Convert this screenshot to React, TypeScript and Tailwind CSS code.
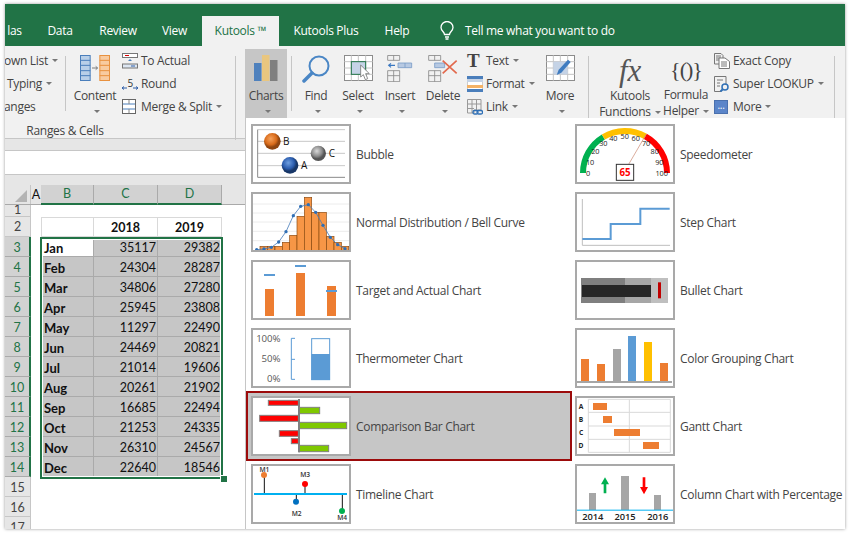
import type { ReactNode } from "react";

const rows = [
  ["Jan", 35117, 29382],
  ["Feb", 24304, 28287],
  ["Mar", 34806, 27280],
  ["Apr", 25945, 23808],
  ["May", 11297, 22490],
  ["Jun", 24469, 20821],
  ["Jul", 21014, 19606],
  ["Aug", 20261, 21902],
  ["Sep", 16685, 22494],
  ["Oct", 21253, 24335],
  ["Nov", 26310, 24567],
  ["Dec", 22640, 18546],
];

const Caret = () => <span className="inline-block ml-[4px] align-middle border-x-[3px] border-t-[3px] border-x-transparent border-t-[#777]" />;

// thumbnails are drawn in 3x units, so 3 units is one pixel on screen
const Thumb = ({ x, y, children }: { x: number; y: number; children: ReactNode }) => (
  <div className="w-[100px] h-[60px] shrink-0 border-2 border-[#a9a9a9] bg-white">
    <svg width="96" height="56" viewBox={`${x} ${y} 288 168`} className="block" fontFamily="'Open Sans', sans-serif">
      {children}
    </svg>
  </div>
);

const Bubble = () => (
  <Thumb x={24} y={24}>
    <defs>
      <radialGradient id="bo" cx="40%" cy="35%"><stop offset="0" stopColor="#f5a25d" /><stop offset="0.7" stopColor="#d96b1a" /><stop offset="1" stopColor="#8f4510" /></radialGradient>
      <radialGradient id="bb" cx="40%" cy="35%"><stop offset="0" stopColor="#6f9fe0" /><stop offset="0.7" stopColor="#2a5cae" /><stop offset="1" stopColor="#173667" /></radialGradient>
      <radialGradient id="bg" cx="40%" cy="35%"><stop offset="0" stopColor="#d8d8d8" /><stop offset="0.7" stopColor="#8a8a8a" /><stop offset="1" stopColor="#555" /></radialGradient>
    </defs>
    <path d="M38 35H300M38 70H300M38 106H300M38 143H300" stroke="#bdbdbd" strokeWidth="2.5" />
    <path d="M38 35V178H300" stroke="#8a8a8a" strokeWidth="3" fill="none" />
    <circle cx="82" cy="70" r="25" fill="url(#bo)" />
    <circle cx="135" cy="142" r="25" fill="url(#bb)" />
    <circle cx="220" cy="106" r="23" fill="url(#bg)" />
    <text x="114" y="80" fontSize="30" fill="#111">B</text>
    <text x="168" y="153" fontSize="30" fill="#111">A</text>
    <text x="251" y="118" fontSize="30" fill="#111">C</text>
  </Thumb>
);

const bell = [[45, 385], [67, 385], [90, 385], [112, 373], [134, 352], [156, 295], [178, 238], [200, 283], [222, 283], [245, 355], [267, 373], [289, 385]];
const bellDots = [[35, 395], [57, 393], [79, 388], [101, 372], [123, 341], [145, 293], [167, 265], [190, 260], [212, 283], [234, 322], [256, 358], [278, 380], [300, 392]];

const BellCurve = () => (
  <Thumb x={24} y={228}>
    <path d="M24 258H312M24 285H312M24 312H312M24 340H312M24 368H312" stroke="#e3e3e3" strokeWidth="2" />
    {bell.map(([x, t]) => <rect key={x} x={x} y={t} width="22" height={398 - t} fill="#f79646" stroke="#8a4a10" strokeWidth="2" />)}
    <polyline points={bellDots.map((p) => p.join(",")).join(" ")} fill="none" stroke="#4a7ebb" strokeWidth="2.5" />
    {bellDots.map(([x, y]) => <circle key={x} cx={x} cy={y} r="5" fill="#2f6fb5" />)}
  </Thumb>
);

const TargetActual = () => (
  <Thumb x={24} y={21}>
    <rect x="60" y="102" width="27" height="81" fill="#ed7d31" />
    <rect x="153" y="54" width="27" height="129" fill="#ed7d31" />
    <rect x="246" y="93" width="27" height="90" fill="#ed7d31" />
    <rect x="57" y="57" width="33" height="6" fill="#5b9bd5" />
    <rect x="150" y="30" width="33" height="6" fill="#5b9bd5" />
    <rect x="243" y="105" width="33" height="6" fill="#5b9bd5" />
  </Thumb>
);

const Thermometer = () => (
  <Thumb x={24} y={225}>
    <g fontSize="29" fill="#595959" textAnchor="end">
      <text x="106" y="260">100%</text>
      <text x="106" y="321">50%</text>
      <text x="106" y="380">0%</text>
    </g>
    <path d="M150 250H139V373H150M139 313H150" fill="none" stroke="#5b9bd5" strokeWidth="3" />
    <rect x="200" y="251" width="54" height="123" fill="#fff" stroke="#5b9bd5" strokeWidth="3" />
    <rect x="199" y="297" width="56" height="78" fill="#5b9bd5" />
  </Thumb>
);

const ComparisonBar = () => (
  <Thumb x={24} y={24}>
    {[[70, 31, 90, 15], [44, 76, 116, 18], [103, 122, 57, 17], [139, 146, 21, 15]].map(([x, y, w, h]) => (
      <rect key={y} x={x} y={y} width={w} height={h} fill="#ff0000" stroke="#808080" strokeWidth="3" />
    ))}
    {[[163, 52, 61, 19], [163, 97, 142, 19], [163, 166, 88, 19]].map(([x, y, w, h]) => (
      <rect key={y} x={x} y={y} width={w} height={h} fill="#7fc800" stroke="#808080" strokeWidth="3" />
    ))}
    <rect x="159" y="27" width="6" height="160" fill="#808080" />
  </Thumb>
);

const Timeline = () => (
  <Thumb x={24} y={228}>
    <path d="M58 256V312M154 312V335M180 283V312M292 312V362" stroke="#111" strokeWidth="3" />
    <rect x="27" y="309" width="279" height="6" fill="#00b0f0" />
    <circle cx="57" cy="255" r="9" fill="#ed7d31" />
    <circle cx="180" cy="282" r="9" fill="#ff0000" />
    <circle cx="153" cy="335" r="9" fill="#0070c0" />
    <circle cx="291" cy="363" r="9" fill="#00b050" />
    <g fontSize="20" fill="#333" textAnchor="middle" fontWeight="600">
      <text x="58" y="245">M1</text>
      <text x="180" y="260">M3</text>
      <text x="155" y="377">M2</text>
      <text x="291" y="391">M4</text>
    </g>
  </Thumb>
);

const pt = (a: number, r: number) => {
  const t = (a * Math.PI) / 180;
  return `${(165 + r * Math.cos(t)).toFixed(1)} ${(165 - r * Math.sin(t)).toFixed(1)}`;
};
const arc = (a: number, b: number) => `M${pt(a, 126)}A126 126 0 0 1 ${pt(b, 126)}`;
const ticks = [[0, 54, 174], [10, 60, 140], [20, 76, 109], [30, 100, 84], [40, 130, 69], [50, 164, 63], [60, 197, 69], [70, 228, 84], [80, 254, 109], [90, 268, 140], [100, 275, 174]];

const Speedometer = () => (
  <Thumb x={21} y={24}>
    <path d={arc(180, 121)} fill="none" stroke="#00b050" strokeWidth="18" />
    <path d={arc(121, 61)} fill="none" stroke="#ffc000" strokeWidth="18" />
    <path d={arc(61, 0)} fill="none" stroke="#ff0000" strokeWidth="18" />
    <g fontSize="22" fill="#222" textAnchor="middle">
      {ticks.map(([n, x, y]) => <text key={n} x={x} y={y}>{n}</text>)}
    </g>
    <path d="M176 139L229 48" stroke="#c9836b" strokeWidth="2" />
    <rect x="139" y="139" width="52" height="48" fill="#fff" stroke="#333" strokeWidth="3" />
    <text x="165" y="174" fontSize="29" fontWeight="700" fill="#ff0000" textAnchor="middle">65</text>
  </Thumb>
);

const StepChart = () => (
  <Thumb x={21} y={228}>
    <path d="M37 243V382H300" fill="none" stroke="#bfbfbf" strokeWidth="3" />
    <path d="M37 363H122V318H211V272H299" fill="none" stroke="#5b9bd5" strokeWidth="6" />
  </Thumb>
);

const BulletChart = () => (
  <Thumb x={21} y={21}>
    <rect x="33" y="69" width="132" height="75" fill="#7f7f7f" />
    <rect x="165" y="69" width="78" height="75" fill="#a6a6a6" />
    <rect x="243" y="69" width="51" height="75" fill="#bfbfbf" />
    <rect x="36" y="90" width="207" height="36" fill="#262626" />
    <rect x="264" y="82" width="9" height="48" fill="#c00000" />
  </Thumb>
);

const ColorGrouping = () => (
  <Thumb x={21} y={225}>
    {[[33, 312, "#ed7d31"], [81, 327, "#ed7d31"], [129, 282, "#a5a5a5"], [174, 243, "#5b9bd5"], [222, 261, "#ffc000"], [270, 324, "#ed7d31"]].map(([x, t, c]) => (
      <rect key={x as number} x={x as number} y={t as number} width="24" height={378 - (t as number)} fill={c as string} />
    ))}
    <rect x="21" y="378" width="285" height="6" fill="#a6a6a6" />
  </Thumb>
);

const Gantt = () => (
  <Thumb x={21} y={24}>
    <path d="M55 28H301V187H55ZM178 28V187M55 67H301M55 108H301M55 148H301" fill="none" stroke="#d9d9d9" strokeWidth="3" />
    {[[69, 39, 42], [99, 78, 27], [132, 117, 78], [219, 156, 48]].map(([x, y, w]) => <rect key={y} x={x} y={y} width={w} height="21" fill="#ed7d31" />)}
    <g fontSize="20" fontWeight="700" fill="#222" textAnchor="middle">
      <text x="33" y="56">A</text>
      <text x="33" y="95">B</text>
      <text x="33" y="134">C</text>
      <text x="33" y="173">D</text>
    </g>
  </Thumb>
);

const ColumnPercent = () => (
  <Thumb x={21} y={228}>
    <rect x="57" y="309" width="21" height="51" fill="#a6a6a6" />
    <rect x="153" y="258" width="24" height="102" fill="#a6a6a6" />
    <rect x="252" y="315" width="21" height="45" fill="#a6a6a6" />
    <rect x="20" y="359" width="290" height="3" fill="#00b0f0" />
    <path d="M105 262L117 283H109V310H101V283H93Z" fill="#00b050" />
    <path d="M222 313L210 291H218V262H226V291H234Z" fill="#ff0000" />
    <g fontSize="28" fontWeight="600" fill="#222" textAnchor="middle">
      <text x="68" y="391">2014</text>
      <text x="165" y="391">2015</text>
      <text x="263" y="391">2016</text>
    </g>
  </Thumb>
);

const GridGlyph = ({ w = 29, h = 26, children }: { w?: number; h?: number; children?: ReactNode }) => (
  <svg width={w} height={h} viewBox="0 0 87 78" className="block">
    <rect x="1.5" y="1.5" width="84" height="75" fill="#fff" stroke="#8c8c8c" strokeWidth="3" />
    <path d="M1 20H86M1 39H86M1 58H86M22 1V77M43 1V77M65 1V77" stroke="#c4c4c4" strokeWidth="3" />
    {children}
  </svg>
);

const Big = ({ w, label, label2, icon, active }: { w: number; label: string; label2?: string; icon: ReactNode; active?: boolean }) => (
  <div className={`flex flex-col items-center shrink-0 h-[69px] mt-[3px] ${active ? "bg-[#c6c6c6]" : ""}`} style={{ width: w }}>
    <div className="h-[34px] mt-[6px] flex items-start justify-center">{icon}</div>
    <div className="leading-[17px] text-center whitespace-nowrap">{label}</div>
    {label2 ? <div className="leading-[15px] whitespace-nowrap">{label2}<Caret /></div> : <div className="leading-[14px]"><Caret /></div>}
  </div>
);

const Small = ({ icon, label, caret }: { icon?: ReactNode; label: string; caret?: boolean }) => (
  <div className="h-[23px] flex items-center whitespace-nowrap">
    {icon && <span className="w-[19px] shrink-0 flex">{icon}</span>}
    {label}
    {caret && <Caret />}
  </div>
);

const Sep = ({ h, ml, mr }: { h: number; ml: number; mr: number }) => (
  <div className="w-px bg-[#c6c6c6] shrink-0 mt-[10px]" style={{ height: h, marginLeft: ml, marginRight: mr }} />
);

const Bulb = () => (
  <svg width="14" height="20" viewBox="0 0 14 20" fill="none" stroke="#fff" strokeWidth="1.3" className="block">
    <path d="M4.5 13.5C4.5 11 1 9.8 1 6.5a6 6 0 0 1 12 0c0 3.300-3.500 4.500-3.500 7Z" />
    <path d="M5 16h4M5.500 18h3" />
  </svg>
);

const Tab = ({ label, w, on }: { label: string; w: number; on?: boolean }) => (
  <div className={`h-[30px] leading-[30px] text-center whitespace-nowrap shrink-0 ${on ? "bg-[#f1f1f1] text-[#217346]" : "text-white"}`} style={{ width: w }}>
    {label}
  </div>
);

const menu: [ReactNode, string, ReactNode, string][] = [
  [<Bubble />, "Bubble", <Speedometer />, "Speedometer"],
  [<BellCurve />, "Normal Distribution / Bell Curve", <StepChart />, "Step Chart"],
  [<TargetActual />, "Target and Actual Chart", <BulletChart />, "Bullet Chart"],
  [<Thermometer />, "Thermometer Chart", <ColorGrouping />, "Color Grouping Chart"],
  [<ComparisonBar />, "Comparison Bar Chart", <Gantt />, "Gantt Chart"],
  [<Timeline />, "Timeline Chart", <ColumnPercent />, "Column Chart with Percentage"],
];

export default function App() {
  return (
    <div className="w-[850px] h-[536px] bg-white pt-[4px] pl-[5px] overflow-hidden">
      <div className="relative w-[840px] h-[525px] overflow-hidden bg-white shadow-[0_0_3px_#999] text-[12px] tracking-[-0.3px] text-[#444] font-['Open_Sans',sans-serif]">
        {/* Title and tabs */}
        <div className="h-[42px] bg-[#217346] pt-[12px] flex">
          <Tab label="las" w={19} />
          <div className="w-[17px] shrink-0" />
          <Tab label="Data" w={38} />
          <div className="w-[10px] shrink-0" />
          <Tab label="Review" w={58} />
          <Tab label="View" w={55} />
          <Tab label="Kutools ™" w={77} on />
          <div className="w-[12px] shrink-0" />
          <Tab label="Kutools Plus" w={70} />
          <div className="w-[21px] shrink-0" />
          <Tab label="Help" w={30} />
          <div className="w-[28px] shrink-0" />
          <div className="h-[30px] flex items-center gap-[11px] text-white whitespace-nowrap shrink-0">
            <Bulb />
            Tell me what you want to do
          </div>
        </div>

        {/* Ribbon */}
        <div className="h-[93px] bg-[#f1f1f1] border-b border-[#c6c6c6] flex relative">
          <div className="w-[61px] shrink-0 pt-[3px] -ml-px">
            <Small label="own List" caret />
            <div className="pl-[3px]"><Small label="Typing" caret /></div>
            <Small label="anges" />
          </div>
          <Sep h={55} ml={0} mr={5} />
          <Big
            w={48}
            label="Content"
            icon={
              <svg width="30" height="26" viewBox="0 0 90 78" fill="none" className="block">
                <rect x="1.500" y="1.500" width="29" height="75" fill="#b8cfe8" stroke="#4a7ebb" strokeWidth="3" />
                <path d="M1 16H31M1 31H31M1 47H31M1 62H31" stroke="#4a7ebb" strokeWidth="3" />
                <rect x="59.500" y="1.500" width="29" height="75" fill="#f8cba0" stroke="#e8913f" strokeWidth="3" />
                <path d="M59 16H89M59 31H89M59 47H89M59 62H89" stroke="#e8913f" strokeWidth="3" />
                <path d="M36 39H52M47 34L53 39L47 44" stroke="#666" strokeWidth="2.500" />
              </svg>
            }
          />
          <div className="pt-[3px] ml-[3px] w-[113px] shrink-0">
            <Small
              label="To Actual"
              icon={
                <svg width="16" height="16" viewBox="0 0 16 16" fill="none" className="block">
                  <rect x="0.500" y="0.500" width="15" height="4" stroke="#777" fill="#fff" />
                  <path d="M3 2.500H7" stroke="#d00" />
                  <path d="M8 6L10 8H6ZM8 10L6 8" fill="#4a7ebb" />
                  <rect x="0.500" y="11" width="15" height="4" stroke="#777" fill="#dce6f2" />
                  <path d="M9 13H13" stroke="#2f5fa8" />
                </svg>
              }
            />
            <Small
              label="Round"
              icon={
                <svg width="16" height="16" viewBox="0 0 16 16" fill="none" className="block">
                  <text x="5.500" y="10.500" fontSize="10" fill="#333" fontFamily="'Open Sans', sans-serif">5</text>
                  <path d="M0 12H5M0 12L2 10.500M0 12L2 13.500M11 12H16M16 12L14 10.500M16 12L14 13.500" stroke="#2f5fa8" />
                </svg>
              }
            />
            <Small
              label="Merge & Split"
              caret
              icon={
                <svg width="14" height="15" viewBox="0 0 14 15" fill="none" className="block">
                  <rect x="0.500" y="0.500" width="13" height="14" stroke="#666" fill="#fff" />
                  <path d="M1 5H13M1 10H13" stroke="#4a7ebb" />
                  <path d="M7 1V5M7 10V14" stroke="#888" />
                </svg>
              }
            />
          </div>
          <Sep h={84} ml={0} mr={9} />
          <Big
            w={42}
            active
            label="Charts"
            icon={
              <svg width="24" height="26" viewBox="0 0 24 26" className="block">
                <rect x="0" y="8" width="7.500" height="18" fill="#4f81bd" />
                <rect x="8" y="0" width="7.500" height="26" fill="#e9c67f" />
                <rect x="16" y="5" width="7.500" height="21" fill="#7f7f7f" />
              </svg>
            }
          />
          <Sep h={55} ml={4} mr={3} />
          <Big
            w={42}
            label="Find"
            icon={
              <svg width="28" height="28" viewBox="0 0 28 28" fill="none" className="block">
                <circle cx="17" cy="11" r="9.500" stroke="#4a86c5" strokeWidth="2" />
                <path d="M10 18L2 26" stroke="#4a86c5" strokeWidth="3.500" strokeLinecap="round" />
              </svg>
            }
          />
          <Big
            w={42}
            label="Select"
            icon={
              <svg width="29" height="26" viewBox="0 0 87 78" className="block">
                <rect x="1.500" y="1.500" width="84" height="75" fill="#fff" stroke="#8c8c8c" strokeWidth="3" />
                <path d="M1 20H86M1 39H86M1 58H86M22 1V77M43 1V77M65 1V77" stroke="#c4c4c4" strokeWidth="3" />
                <rect x="22" y="20" width="43" height="38" fill="#c5d3e6" stroke="#217346" strokeWidth="3" />
                <path d="M50 30V66L58 59L64 74L71 71L65 56H76Z" fill="#fff" stroke="#777" strokeWidth="2.500" />
              </svg>
            }
          />
          <Big
            w={42}
            label="Insert"
            icon={
              <svg width="26" height="27" viewBox="0 0 78 81" fill="none" className="block">
                <path d="M2 1.500H38V16H2ZM20 1.500V16M2 62H38M2 47H38V80H2ZM20 47V80" stroke="#888" strokeWidth="2.500" />
                <path d="M33 24H74V38H33ZM54 24V38" fill="#b7c9e2" stroke="#7a9cc6" strokeWidth="2.500" />
                <path d="M24 31H6M12 25L5 31L12 37" stroke="#3a78c2" strokeWidth="3.500" />
              </svg>
            }
          />
          <Big
            w={44}
            label="Delete"
            icon={
              <svg width="30" height="27" viewBox="0 0 90 81" fill="none" className="block">
                <path d="M2 1.500H38V16H2ZM20 1.500V16M2 62H38M2 47H38V80H2ZM20 47V80" stroke="#888" strokeWidth="2.500" />
                <path d="M20 24H50V38H20Z" fill="#b7c9e2" stroke="#7a9cc6" strokeWidth="2.500" />
                <path d="M44 17L86 55M86 17L44 55" stroke="#e2694d" strokeWidth="5" />
              </svg>
            }
          />
          <div className="pt-[3px] w-[73px] shrink-0 ml-[2px]">
            <Small label="Text" caret icon={<span className="font-['Liberation_Serif',serif] font-bold text-[19px] leading-[16px] text-[#444]">T</span>} />
            <Small
              label="Format"
              caret
              icon={
                <svg width="16" height="16" viewBox="0 0 16 16" className="block">
                  <rect width="16" height="16" fill="#fff" stroke="#999" />
                  <rect width="16" height="3" fill="#4a7ebb" />
                  <rect y="3" width="16" height="3" fill="#c5d3e6" />
                  <rect y="9" width="16" height="3" fill="#f4b266" />
                  <rect y="13" width="16" height="3" fill="#4a7ebb" />
                </svg>
              }
            />
            <Small
              label="Link"
              caret
              icon={
                <svg width="16" height="16" viewBox="0 0 16 16" fill="none" className="block">
                  <path d="M.500 .500H14V11H7V14H.500ZM5 1V14M9.500 1V11M1 5H14M1 9.500H7" stroke="#999" />
                  <rect x="6" y="11.500" width="5" height="3.500" rx="1.500" stroke="#2f6fb5" strokeWidth="1.300" />
                  <rect x="10" y="11.500" width="5.500" height="3.500" rx="1.500" stroke="#2f6fb5" strokeWidth="1.300" />
                </svg>
              }
            />
          </div>
          <Big
            w={40}
            label="More"
            icon={
              <GridGlyph>
                <rect x="22" y="20" width="43" height="38" fill="#c5d3e6" />
                <path d="M32 60L38 44L66 14L74 21L46 53Z" fill="#3f7cc0" />
              </GridGlyph>
            }
          />
          <Sep h={67} ml={8} mr={10} />
          <Big
            w={62}
            label="Kutools"
            label2="Functions"
            icon={<span className="font-['Liberation_Serif',serif] italic text-[31px] leading-[32px] text-[#555]">fx</span>}
          />
          <Big
            w={50}
            label="Formula"
            label2="Helper"
            icon={<span className="font-['Liberation_Serif',serif] text-[22px] leading-[30px] tracking-[-1px] text-[#444]">{"{()}"}</span>}
          />
          <div className="pt-[3px] ml-[3px] w-[120px] shrink-0">
            <Small
              label="Exact Copy"
              icon={
                <svg width="16" height="16" viewBox="0 0 16 16" fill="none" stroke="#777" className="block">
                  <path d="M.500 .500H7L9 2.500V11H.500ZM2 3H7M2 5H7M2 7H7" />
                  <path d="M5 5H11L15.500 8.500V15.500H5Z" fill="#fff" />
                  <path d="M7 9H13M7 11H13M7 13H13" />
                </svg>
              }
            />
            <Small
              label="Super LOOKUP"
              caret
              icon={
                <svg width="16" height="16" viewBox="0 0 16 16" fill="none" className="block">
                  <path d="M.500 .500H12V9M7 15.500H.500V.500" stroke="#777" />
                  <path d="M3 4H9M3 7H6M3 10H6" stroke="#777" />
                  <circle cx="11" cy="11" r="3" stroke="#2f6fb5" strokeWidth="1.500" />
                  <path d="M8.500 13.500L6.500 15.500" stroke="#2f6fb5" strokeWidth="2" />
                </svg>
              }
            />
            <Small
              label="More"
              caret
              icon={
                <div className="w-[14px] h-[14px] bg-[#5b85c9] border border-[#4a70ad] text-white text-[10px] leading-[8px] text-center">...</div>
              }
            />
          </div>
          <div className="absolute left-[21px] top-[76px] w-[78px] text-center whitespace-nowrap">Ranges &amp; Cells</div>
          <Sep h={67} ml={0} mr={0} />
        </div>

        {/* Formula bar strip */}
        <div className="h-[11px] bg-[#e6e6e6]" />
        <div className="h-[25px] bg-white border-y border-[#c6c6c6]" />
        <div className="h-[10px] bg-[#e6e6e6]" />

        {/* Sheet */}
        <div className="relative font-['Lato',sans-serif] text-[12.500px] tracking-normal text-[#111]">
          <div className="flex h-[20px] bg-[#e6e6e6] border-b border-[#a9a9a9]">
            <div className="w-[26px] shrink-0 relative border-r border-[#c6c6c6]">
              <div className="absolute right-[3px] bottom-[2px] border-l-[12px] border-b-[12px] border-l-transparent border-b-[#b4b4b4]" />
            </div>
            <div className="w-[10px] shrink-0 text-center leading-[19px]">A</div>
            {[["B", 53], ["C", 64], ["D", 64]].map(([c, w]) => (
              <div key={c} className="bg-[#d2d2d2] border-r border-[#aaa] border-b-2 border-b-[#217346] text-center leading-[18px] text-[#217346] h-[20px]" style={{ width: w as number }}>
                {c}
              </div>
            ))}
          </div>
          <div className="flex h-[12px] overflow-hidden">
            <div className="w-[26px] shrink-0 bg-[#e6e6e6] border-r border-[#c6c6c6] border-b text-center text-[#444] leading-[10px]">1</div>
          </div>
          <div className="flex h-[20px]">
            <div className="w-[26px] shrink-0 bg-[#e6e6e6] border-r border-b border-[#c6c6c6] text-center text-[#444] leading-[19px]">2</div>
            <div className="w-[10px] shrink-0" />
            <div className="w-[53px] border border-[#d9d9d9]" />
            <div className="w-[64px] border-y border-r border-[#d9d9d9] text-center font-bold text-[12.500px] leading-[20px]">2018</div>
            <div className="w-[64px] border-y border-r border-[#d9d9d9] text-center font-bold text-[12.500px] leading-[20px]">2019</div>
          </div>
          {rows.map(([m, a, b], i) => (
            <div key={m} className="flex h-[20px]">
              <div className="w-[26px] shrink-0 bg-[#d2d2d2] border-r-2 border-r-[#217346] border-b border-b-[#aaa] text-center text-[#217346] leading-[22px]">{i + 3}</div>
              <div className="w-[10px] shrink-0" />
              <div className={`w-[53px] pl-[3px] font-bold text-[13px] leading-[22px] border-b border-r border-[#aaa] ${i === 0 ? "bg-white" : "bg-[#c6c6c6]"}`}>{m}</div>
              <div className="w-[64px] pr-[1px] text-right leading-[22px] bg-[#c6c6c6] border-b border-r border-[#aaa]">{a}</div>
              <div className="w-[64px] pr-[1px] text-right leading-[22px] bg-[#c6c6c6] border-b border-r border-[#aaa]">{b}</div>
            </div>
          ))}
          {[15, 16, 17].map((n) => (
            <div key={n} className="w-[26px] h-[20px] bg-[#e6e6e6] border-r border-b border-[#c6c6c6] text-center text-[#444] leading-[22px]">{n}</div>
          ))}
          {/* selection frame */}
          <div className="absolute left-[35px] top-[52px] w-[183px] h-[242px] border-2 border-[#217346] shadow-[inset_0_0_0_1px_#fff] pointer-events-none" />
          <div className="absolute left-[215px] top-[290px] w-[6px] h-[6px] bg-[#217346] border border-white box-content" />
        </div>

        {/* Charts dropdown */}
        <div className="absolute left-[240px] top-[114px] right-0 bottom-0 bg-white border-l border-[#c6c6c6] pt-[2px] text-[#444]">
          {menu.map(([li, lt, ri, rt]) => (
            <div key={lt} className="flex h-[68px]">
              <div className={`w-[326px] shrink-0 flex items-center gap-[5px] whitespace-nowrap ${lt === "Comparison Bar Chart" ? "bg-[#c6c6c6] border-2 border-[#9c0b0b] pl-[3px] -my-px" : "pl-[5px]"}`}>
                {li}
                <span className="pt-px">{lt}</span>
              </div>
              <div className="pl-[3px] flex items-center gap-[5px] whitespace-nowrap">
                {ri}
                <span className="pt-px">{rt}</span>
              </div>
            </div>
          ))}
        </div>
      </div>
    </div>
  );
}
